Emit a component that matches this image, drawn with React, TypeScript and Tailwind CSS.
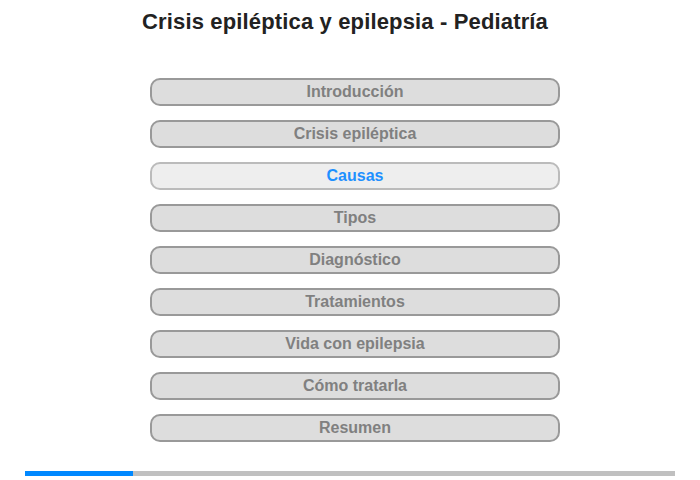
const sections = [
  "Introducción",
  "Crisis epiléptica",
  "Causas",
  "Tipos",
  "Diagnóstico",
  "Tratamientos",
  "Vida con epilepsia",
  "Cómo tratarla",
  "Resumen",
];

const active = "Causas";

export default function App() {
  return (
    <div className="flex h-[480px] w-[700px] flex-col bg-white font-['Liberation_Sans',Arial,sans-serif]">
      <h1 className="pt-[9px] pr-[10px] text-center text-[22px] leading-[26px] font-bold tracking-[0.15px] text-[#222]">
        Crisis epiléptica y epilepsia - Pediatría
      </h1>
      <nav className="mt-[43px] flex flex-col items-center gap-[14px] pl-[10px]">
        {sections.map((s) =>
          s === active ? (
            <div
              key={s}
              className="flex h-[28px] w-[410px] items-center justify-center rounded-[10px] border-2 border-[#bbb] bg-[#eee] text-[16px] font-bold text-[#1e90ff]"
            >
              {s}
            </div>
          ) : (
            <div
              key={s}
              className="flex h-[28px] w-[410px] items-center justify-center rounded-[10px] border-2 border-[#999] bg-[#ddd] text-[16px] font-bold text-[#808080]"
            >
              {s}
            </div>
          )
        )}
      </nav>
      <div className="mx-[25px] mt-[29px] flex h-[5px] bg-[#c0c0c0]">
        <div className="w-[108px] bg-[#0088ff]" />
      </div>
    </div>
  );
}
